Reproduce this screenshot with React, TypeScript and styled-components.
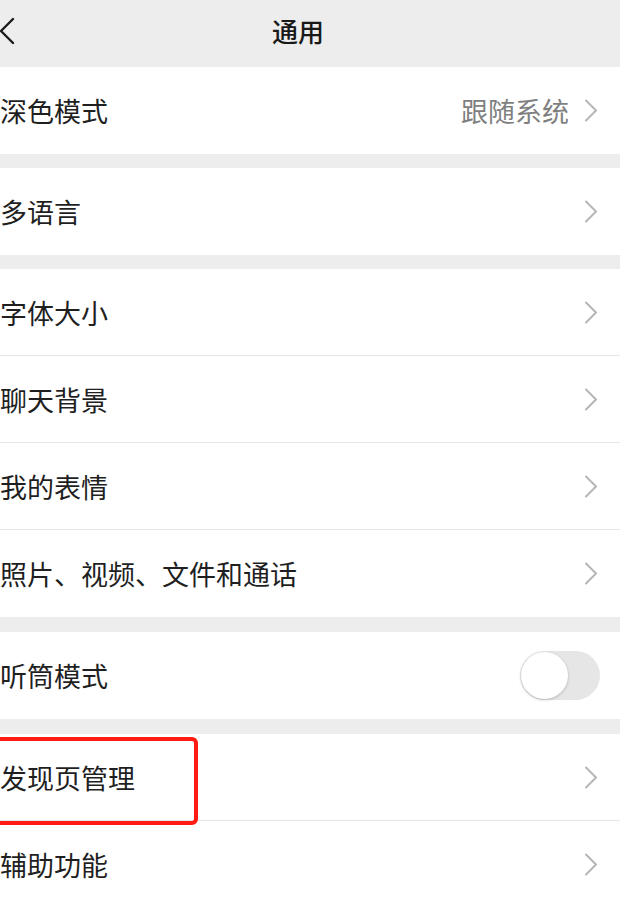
import React from "react";
import styled, { createGlobalStyle } from "styled-components";

const Global = createGlobalStyle`
  html, body { margin: 0; padding: 0; background: #ededed; }
  body { font-family: "Noto Sans CJK SC", "Noto Sans", sans-serif; }
`;

const Page = styled.div`
  width: 620px;
  height: 897px;
  overflow: hidden;
  background: #ededed;
  display: flex;
  flex-direction: column;
`;

const Header = styled.div`
  height: 67px;
  flex: none;
  display: flex;
  align-items: center;
  justify-content: center;
  position: relative;
`;

const Title = styled.div`
  font-size: 26px;
  font-weight: 500;
  color: #191919;
  margin-left: -24px;
  margin-top: -6px;
`;

const Back = styled.svg`
  position: absolute;
  left: 0;
  top: 17px;
`;

const Group = styled.div<{ $gap: number }>`
  margin-top: ${(p) => p.$gap}px;
  background: #fff;
  display: flex;
  flex-direction: column;
  flex: none;
`;

const Row = styled.div<{ $divider?: boolean }>`
  height: 87px;
  box-sizing: border-box;
  display: flex;
  align-items: center;
  padding-right: 22px;
  position: relative;
  border-bottom: ${(p) => (p.$divider ? "1px solid #e6e6e6" : "none")};
`;

const Label = styled.div`
  flex: 1;
  font-size: 27px;
  color: #1f1f1f;
`;

const Value = styled.div`
  font-size: 27px;
  color: #7f7f7f;
  margin-right: 15px;
`;

const Toggle = styled.div`
  width: 80px;
  height: 49px;
  border-radius: 25px;
  background: #e6e6e6;
  position: relative;
  margin-right: -2px;
`;

const Knob = styled.div`
  position: absolute;
  left: 1px;
  top: 1px;
  width: 47px;
  height: 47px;
  border-radius: 50%;
  background: #fff;
  box-shadow: 0 1px 3px rgba(0, 0, 0, 0.22);
`;

const Highlight = styled.div`
  position: absolute;
  left: -12px;
  top: 3px;
  width: 210px;
  height: 88px;
  box-sizing: border-box;
  border: 4px solid #ff1b14;
  border-radius: 6px;
  pointer-events: none;
`;

const Chevron = () => (
  <svg width="14" height="23" viewBox="0 0 14 23">
    <path d="M2 1.5 L12 11.5 L2 21.5" fill="none" stroke="#b5b5b5" strokeWidth="2" strokeLinecap="round" strokeLinejoin="round" />
  </svg>
);

type Item = { label: string; value?: string; toggle?: boolean; highlight?: boolean };

const groups: { gap: number; items: Item[] }[] = [
  { gap: 0, items: [{ label: "深色模式", value: "跟随系统" }] },
  { gap: 14, items: [{ label: "多语言" }] },
  {
    gap: 14,
    items: [
      { label: "字体大小" },
      { label: "聊天背景" },
      { label: "我的表情" },
      { label: "照片、视频、文件和通话" },
    ],
  },
  { gap: 15, items: [{ label: "听筒模式", toggle: true }] },
  { gap: 15, items: [{ label: "发现页管理", highlight: true }, { label: "辅助功能" }] },
];

export default function App() {
  return (
    <Page>
      <Global />
      <Header>
        <Back width="16" height="28" viewBox="0 0 16 28">
          <path d="M13 2 L1 14 L13 26" fill="none" stroke="#1a1a1a" strokeWidth="2.4" strokeLinecap="round" strokeLinejoin="round" />
        </Back>
        <Title>通用</Title>
      </Header>
      {groups.map((g, gi) => (
        <Group key={gi} $gap={g.gap}>
          {g.items.map((it, i) => (
            <Row key={it.label} $divider={i < g.items.length - 1}>
              <Label>{it.label}</Label>
              {it.value && <Value>{it.value}</Value>}
              {it.toggle ? (
                <Toggle>
                  <Knob />
                </Toggle>
              ) : (
                <Chevron />
              )}
              {it.highlight && <Highlight />}
            </Row>
          ))}
        </Group>
      ))}
    </Page>
  );
}
